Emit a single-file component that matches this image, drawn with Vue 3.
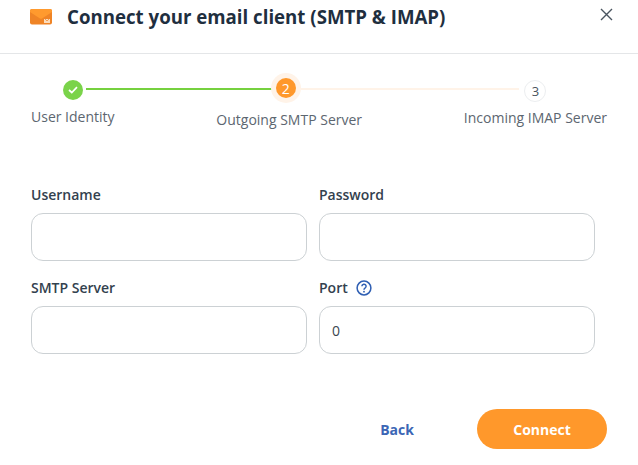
<script setup>
const fieldRows = [
  [{ label: 'Username', value: '' }, { label: 'Password', value: '' }],
  [{ label: 'SMTP Server', value: '' }, { label: 'Port', value: '0', help: true }]
]
</script>

<template>
  <div class="dialog">
    <header class="head">
      <svg class="mail" width="22" height="16" viewBox="0 0 22 16">
        <rect x="0" y="0" width="22" height="15.5" rx="2" fill="#ef8426" />
        <path d="M0 2 Q0 0 2 0 H20 Q22 0 22 2 V3 L12 9.5 Q11 10 10 9.5 L0 3 Z" fill="#ff9a2e" />
        <path d="M14 10 H20 V14 H14 Z" fill="#fbdcbc" />
        <path d="M15 10 L17 12 L19 10" stroke="#ef8426" stroke-width="0.7" fill="none" />
      </svg>
      <h1>Connect your email client (SMTP &amp; IMAP)</h1>
      <svg class="close" width="13" height="13" viewBox="0 0 13 13">
        <path d="M1 1 L12 12 M12 1 L1 12" stroke="#4a5560" stroke-width="1.4" fill="none" />
      </svg>
    </header>

    <section class="stepper">
      <i class="line done"></i>
      <i class="line todo"></i>
      <div class="step s1">
        <span class="dot ok">
          <svg width="10" height="8" viewBox="0 0 10 8"><path d="M1 4 L3.8 6.5 L9 1.2" stroke="#fff" stroke-width="1.7" fill="none" /></svg>
        </span>
        <span class="name">User Identity</span>
      </div>
      <div class="step s2">
        <span class="dot now">2</span>
        <span class="name">Outgoing SMTP Server</span>
      </div>
      <div class="step s3">
        <span class="dot next">3</span>
        <span class="name">Incoming IMAP Server</span>
      </div>
    </section>

    <form class="form">
      <div v-for="(row, r) in fieldRows" :key="r" class="row">
        <label v-for="f in row" :key="f.label" class="field">
          <span class="label">
            {{ f.label }}
            <svg v-if="f.help" class="help" width="16" height="16" viewBox="0 0 16 16">
              <circle cx="8" cy="8" r="6.9" fill="none" stroke="#2f5fb3" stroke-width="1.5" />
              <path d="M5.9 6.3 A2.1 2.1 0 1 1 9 8.1 C8.2 8.6 8 9 8 9.8" fill="none" stroke="#2f5fb3" stroke-width="1.5" />
              <circle cx="8" cy="11.7" r="0.9" fill="#2f5fb3" />
            </svg>
          </span>
          <input class="input" type="text" :value="f.value" />
        </label>
      </div>
    </form>

    <footer class="actions">
      <button type="button" class="back">Back</button>
      <button type="button" class="connect">Connect</button>
    </footer>
  </div>
</template>

<style>
html, body { margin: 0; background: #fff; }
</style>

<style scoped>
.dialog {
  width: 638px;
  height: 465px;
  overflow: hidden;
  background: #fff;
  font-family: "Open Sans", sans-serif;
  color: #1f2d3a;
}
.head {
  height: 54px;
  box-sizing: border-box;
  border-bottom: 1px solid #e4e6e8;
  padding: 9px 0 0 30px;
  display: flex;
  align-items: flex-start;
  position: relative;
}
.mail { flex: none; }
.head h1 {
  margin: -5px 0 0 15px;
  font-size: 18.67px;
  line-height: 25px;
  font-weight: 700;
  color: #1f2f3f;
  white-space: nowrap;
}
.close { position: absolute; left: 600px; top: 8px; }
.stepper {
  position: relative;
  display: flex;
  justify-content: space-between;
  padding: 0 31px;
  height: 99px;
}
.line { position: absolute; height: 2px; top: 34px; }
.line.done { left: 86px; width: 186px; background: #76d13f; }
.line.todo { left: 301px; width: 218px; background: #fff3e8; }
.step {
  display: flex;
  flex-direction: column;
  align-items: center;
  font-size: 14px;
  line-height: 19px;
  color: #5c6670;
  white-space: nowrap;
}
.dot {
  display: flex;
  align-items: center;
  justify-content: center;
  border-radius: 50%;
  box-sizing: border-box;
  flex: none;
  position: relative;
}
.dot.ok { width: 20px; height: 20px; background: #7ad34a; margin-top: 26px; }
.dot.now {
  width: 20px; height: 20px;
  margin-top: 24px;
  margin-left: -7px;
  background: #ff982b;
  color: #fff;
  font-size: 14px;
  font-weight: 500;
  box-shadow: 0 0 0 5px #fff3e8;
}
.dot.next {
  width: 22px; height: 22px;
  margin-top: 26px;
  background: #fff;
  border: 1px solid #eceef0;
  font-size: 13px;
  color: #49545e;
}
.s1 .name { margin-top: 7px; }
.s2 .name { margin-top: 12px; }
.s3 .name { margin-top: 6px; }
.form {
  padding: 32px 43px 0 31px;
  display: flex;
  flex-direction: column;
  gap: 17px;
}
.row { display: grid; grid-template-columns: 276px 276px; column-gap: 12px; }
.field { display: flex; flex-direction: column; }
.label {
  font-size: 14px;
  line-height: 19px;
  font-weight: 600;
  color: #33414e;
  height: 19px;
  margin-bottom: 9px;
  display: flex;
  align-items: center;
  gap: 8px;
}
.input {
  box-sizing: border-box;
  width: 276px;
  height: 48px;
  border: 1px solid #ccd1d4;
  border-radius: 12px;
  background: #fff;
  padding: 0 12px;
  font-family: inherit;
  font-size: 14px;
  color: #3a4650;
  outline: none;
}
.actions {
  margin-top: 55px;
  padding-right: 31px;
  display: flex;
  justify-content: flex-end;
  align-items: center;
}
.back, .connect {
  border: 0;
  font-family: inherit;
  font-size: 14px;
  font-weight: 700;
  padding: 0;
}
.back { background: none; color: #3b66b5; width: 80px; margin-right: 40px; }
.connect { background: #ff982b; color: #fff; width: 130px; height: 40px; border-radius: 20px; }
</style>
